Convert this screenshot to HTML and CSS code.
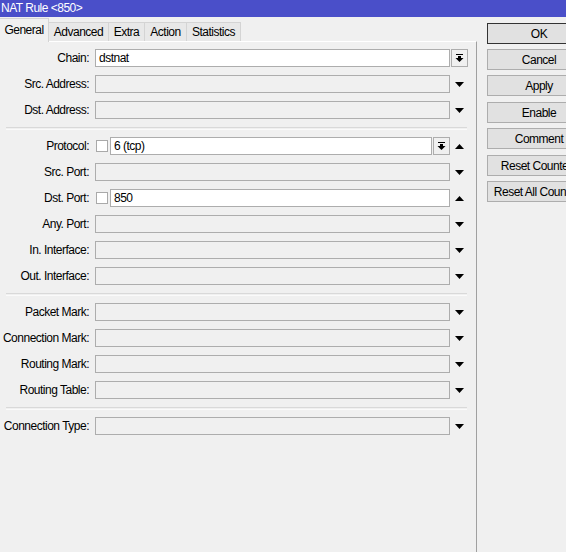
FILE: index.html
```html
<!DOCTYPE html>
<html>
<head>
<meta charset="utf-8">
<link rel="stylesheet" href="styles.css">
</head>
<body>
<div class="titlebar">NAT Rule &lt;850&gt;</div>
<div class="window">
  <div class="left">
    <div class="tabs">
      <div class="tab active t-general">General</div>
      <div class="tab t-adv">Advanced</div>
      <div class="tab t-extra">Extra</div>
      <div class="tab t-action">Action</div>
      <div class="tab t-stats">Statistics</div>
    </div>
    <div class="panel">
      <div class="row">
        <div class="lbl">Chain:</div>
        <div class="field wide">
          <div class="input white">dstnat</div>
          <div class="ddbtn"><svg width="9" height="8" viewBox="0 0 9 8"><rect x="1" y="0" width="7" height="1" fill="#000"/><rect x="3" y="2" width="3" height="2" fill="#000"/><polygon points="0.5,4 8.5,4 4.5,8" fill="#000"/></svg></div>
        </div>
      </div>
      <div class="row">
        <div class="lbl">Src. Address:</div>
        <div class="field"><div class="input"></div></div>
        <div class="tail"><svg width="9" height="5" viewBox="0 0 9 5"><polygon points="0,0 9,0 4.5,5" fill="#000"/></svg></div>
      </div>
      <div class="row">
        <div class="lbl">Dst. Address:</div>
        <div class="field"><div class="input"></div></div>
        <div class="tail"><svg width="9" height="5" viewBox="0 0 9 5"><polygon points="0,0 9,0 4.5,5" fill="#000"/></svg></div>
      </div>
      <div class="sep"></div>
      <div class="row">
        <div class="lbl">Protocol:</div>
        <div class="field">
          <div class="check"></div>
          <div class="input white">6 (tcp)</div>
          <div class="ddbtn"><svg width="9" height="8" viewBox="0 0 9 8"><rect x="1" y="0" width="7" height="1" fill="#000"/><rect x="3" y="2" width="3" height="2" fill="#000"/><polygon points="0.5,4 8.5,4 4.5,8" fill="#000"/></svg></div>
        </div>
        <div class="tail"><svg width="9" height="5" viewBox="0 0 9 5"><polygon points="0,5 9,5 4.5,0" fill="#000"/></svg></div>
      </div>
      <div class="row">
        <div class="lbl">Src. Port:</div>
        <div class="field"><div class="input"></div></div>
        <div class="tail"><svg width="9" height="5" viewBox="0 0 9 5"><polygon points="0,0 9,0 4.5,5" fill="#000"/></svg></div>
      </div>
      <div class="row">
        <div class="lbl">Dst. Port:</div>
        <div class="field">
          <div class="check"></div>
          <div class="input white">850</div>
        </div>
        <div class="tail"><svg width="9" height="5" viewBox="0 0 9 5"><polygon points="0,5 9,5 4.5,0" fill="#000"/></svg></div>
      </div>
      <div class="row">
        <div class="lbl">Any. Port:</div>
        <div class="field"><div class="input"></div></div>
        <div class="tail"><svg width="9" height="5" viewBox="0 0 9 5"><polygon points="0,0 9,0 4.5,5" fill="#000"/></svg></div>
      </div>
      <div class="row">
        <div class="lbl">In. Interface:</div>
        <div class="field"><div class="input"></div></div>
        <div class="tail"><svg width="9" height="5" viewBox="0 0 9 5"><polygon points="0,0 9,0 4.5,5" fill="#000"/></svg></div>
      </div>
      <div class="row">
        <div class="lbl">Out. Interface:</div>
        <div class="field"><div class="input"></div></div>
        <div class="tail"><svg width="9" height="5" viewBox="0 0 9 5"><polygon points="0,0 9,0 4.5,5" fill="#000"/></svg></div>
      </div>
      <div class="sep"></div>
      <div class="row">
        <div class="lbl">Packet Mark:</div>
        <div class="field"><div class="input"></div></div>
        <div class="tail"><svg width="9" height="5" viewBox="0 0 9 5"><polygon points="0,0 9,0 4.5,5" fill="#000"/></svg></div>
      </div>
      <div class="row">
        <div class="lbl">Connection Mark:</div>
        <div class="field"><div class="input"></div></div>
        <div class="tail"><svg width="9" height="5" viewBox="0 0 9 5"><polygon points="0,0 9,0 4.5,5" fill="#000"/></svg></div>
      </div>
      <div class="row">
        <div class="lbl">Routing Mark:</div>
        <div class="field"><div class="input"></div></div>
        <div class="tail"><svg width="9" height="5" viewBox="0 0 9 5"><polygon points="0,0 9,0 4.5,5" fill="#000"/></svg></div>
      </div>
      <div class="row">
        <div class="lbl">Routing Table:</div>
        <div class="field"><div class="input"></div></div>
        <div class="tail"><svg width="9" height="5" viewBox="0 0 9 5"><polygon points="0,0 9,0 4.5,5" fill="#000"/></svg></div>
      </div>
      <div class="sep"></div>
      <div class="row">
        <div class="lbl">Connection Type:</div>
        <div class="field"><div class="input"></div></div>
        <div class="tail"><svg width="9" height="5" viewBox="0 0 9 5"><polygon points="0,0 9,0 4.5,5" fill="#000"/></svg></div>
      </div>
    </div>
  </div>
  <div class="right">
    <div class="btn default">OK</div>
    <div class="btn">Cancel</div>
    <div class="btn">Apply</div>
    <div class="btn gap">Enable</div>
    <div class="btn">Comment</div>
    <div class="btn gap">Reset Counters</div>
    <div class="btn">Reset All Counters</div>
  </div>
</div>
</body>
</html>
```

FILE: styles.css
```css
html, body {
  margin: 0;
  padding: 0;
}
body {
  width: 566px;
  height: 552px;
  overflow: hidden;
  background: #f0f0f0;
  font-family: "Liberation Sans", Arial, sans-serif;
  font-size: 12px;
  letter-spacing: -0.5px;
  color: #000;
}
.titlebar {
  height: 17px;
  background: #4a4fc9;
  color: #fff;
  line-height: 16px;
  padding-left: 1px;
  white-space: nowrap;
}
.window {
  display: flex;
  height: 535px;
}
.left {
  width: 477px;
  flex: none;
  display: flex;
  flex-direction: column;
}
.tabs {
  height: 24px;
  display: flex;
  align-items: flex-end;
  position: relative;
}
.tab {
  box-sizing: border-box;
  height: 19px;
  line-height: 19px;
  text-align: center;
  background: #e8e8e8;
  border: 1px solid #d4d4d4;
  border-bottom: none;
  border-left: none;
  white-space: nowrap;
  flex: none;
}
.t-general { width: 49px; }
.t-adv { width: 60px; }
.t-extra { width: 36px; }
.t-action { width: 42px; }
.t-stats { width: 54px; }
.tab.active {
  height: 24px;
  line-height: 23px;
  background: #f0f0f0;
  position: relative;
  top: 1px;
}
.panel {
  flex: 1;
  box-sizing: border-box;
  border-top: 1px solid #ffffff;
  border-right: 1px solid #a0a0a0;
  padding-top: 7px;
}
.row {
  display: flex;
  height: 18px;
  margin-bottom: 8px;
  align-items: center;
}
.lbl {
  width: 89px;
  margin-right: 6px;
  text-align: right;
  line-height: 18px;
  white-space: nowrap;
  flex: none;
}
.field {
  width: 355px;
  height: 18px;
  display: flex;
  align-items: center;
  flex: none;
}
.field.wide {
  width: 373px;
}
.input {
  flex: 1;
  height: 18px;
  box-sizing: border-box;
  border: 1px solid #adadad;
  background: #f0f0f0;
  padding-left: 3px;
  line-height: 16px;
  white-space: nowrap;
  overflow: hidden;
}
.input.white {
  background: #fff;
}
.ddbtn {
  width: 17px;
  height: 18px;
  box-sizing: border-box;
  margin-left: 1px;
  border: 1px solid #adadad;
  background: #f0f0f0;
  display: flex;
  align-items: center;
  justify-content: center;
  flex: none;
}
.check {
  width: 12px;
  height: 12px;
  box-sizing: border-box;
  border: 1px solid #a9a9a9;
  background: #fff;
  margin: 0 2px 0 1px;
  flex: none;
}
.tail {
  width: 18px;
  display: flex;
  justify-content: center;
  align-items: center;
  flex: none;
}
.tail svg, .ddbtn svg {
  display: block;
}
.sep {
  margin: 1px 0 7px 6px;
  width: 461px;
  height: 1px;
  border-top: 1px solid #d9d9d9;
  border-bottom: 1px solid #fafafa;
}
.right {
  margin-left: 10px;
  padding-top: 6px;
  flex: none;
}
.btn {
  width: 104px;
  height: 21px;
  box-sizing: border-box;
  border: 1px solid #adadad;
  background: #e1e1e1;
  text-align: center;
  line-height: 19px;
  padding-top: 1px;
  margin-bottom: 5px;
  white-space: nowrap;
  overflow: hidden;
}
.btn.default {
  border-color: #333;
}
.btn.gap {
  margin-top: 6px;
}
```
